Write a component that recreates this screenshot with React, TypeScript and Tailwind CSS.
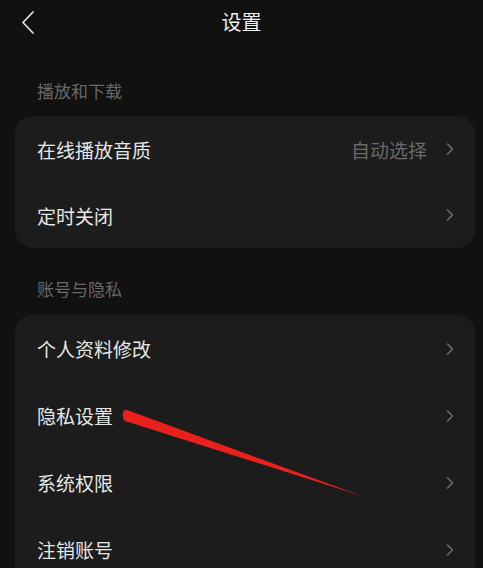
import { ReactNode } from 'react'

const font = { fontFamily: '"Noto Sans CJK SC", "Noto Sans", sans-serif' }

function Chevron() {
  return (
    <svg width="8" height="12" viewBox="0 0 8 12" fill="none" className="shrink-0">
      <path d="M1.5 1 L6.5 6 L1.5 11" stroke="#6a6a6a" strokeWidth="1.6" strokeLinecap="round" strokeLinejoin="round" />
    </svg>
  )
}

function Row({ label, value, tall }: { label: string; value?: string; tall?: boolean }) {
  return (
    <div className={`${tall ? 'h-[67px]' : 'h-[66px]'} flex items-center justify-between pl-[22px] pr-[21px]`}>
      <span className="text-[19px] text-[#e6e6e6] leading-none">{label}</span>
      <div className="flex items-center gap-[19px]">
        {value && <span className="text-[19px] text-[#696969] leading-none">{value}</span>}
        <Chevron />
      </div>
    </div>
  )
}

function Card({ children }: { children: ReactNode }) {
  return <div className="ml-[15px] mr-[8px] rounded-[18px] bg-[#1c1c1c]">{children}</div>
}

export default function App() {
  return (
    <div className="relative w-[483px] h-[568px] overflow-hidden bg-[#111111]" style={font}>
      {/* Header */}
      <div className="relative h-[44px] flex items-center justify-center">
        <svg className="absolute left-[20px] top-[10px]" width="16" height="26" viewBox="0 0 16 26" fill="none">
          <path d="M13 2 L3 12.5 L13 23" stroke="#e0e0e0" strokeWidth="1.8" strokeLinecap="round" strokeLinejoin="round" />
        </svg>
        <span className="text-[20px] text-[#eeeeee] leading-none">设置</span>
      </div>

      <div className="mt-[35px] mb-[13px] pl-[37px] h-[24px] flex items-center text-[17px] text-[#686868]">播放和下载</div>
      <Card>
        <Row label="在线播放音质" value="自动选择" />
        <Row label="定时关闭" />
      </Card>

      <div className="mt-[29px] mb-[14px] pl-[37px] h-[24px] flex items-center text-[17px] text-[#686868]">账号与隐私</div>
      <Card>
        <Row label="个人资料修改" tall />
        <Row label="隐私设置" tall />
        <Row label="系统权限" tall />
        <Row label="注销账号" tall />
      </Card>

      {/* red annotation arrow */}
      <svg className="absolute left-0 top-0 pointer-events-none" width="483" height="568" viewBox="0 0 483 568">
        <path d="M123 413 Q123 410 127 410 L362 496 L125 421 Q122 419 123 413 Z" fill="#e8211c" />
      </svg>
    </div>
  )
}
